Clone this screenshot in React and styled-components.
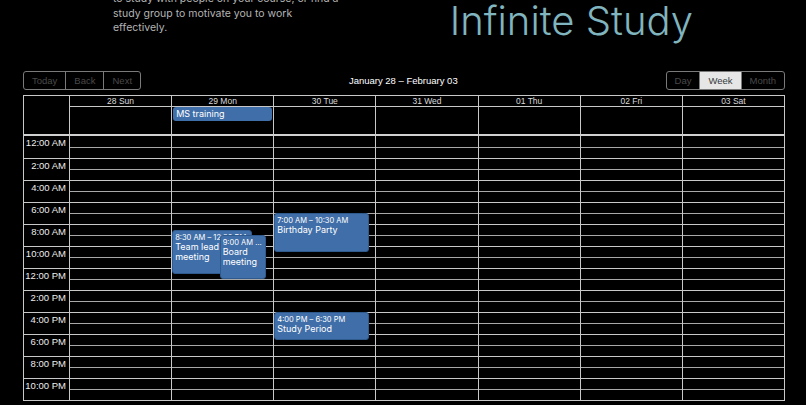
import styled, { createGlobalStyle } from 'styled-components'

const GlobalStyle = createGlobalStyle`
	html, body {
		margin: 0;
		background: #000;
		overflow: hidden;
	}
	* {
		box-sizing: border-box;
	}
`

const days = ['28 Sun', '29 Mon', '30 Tue', '31 Wed', '01 Thu', '02 Fri', '03 Sat']
const hours = [
	'12:00 AM', '2:00 AM', '4:00 AM', '6:00 AM', '8:00 AM', '10:00 AM',
	'12:00 PM', '2:00 PM', '4:00 PM', '6:00 PM', '8:00 PM', '10:00 PM',
]

// hours are in decimal, left/width in percent of the day column
const events = {
	1: [
		{ time: '8:30 AM – 12:30 PM', title: 'Team lead meeting', start: 8.5, end: 12.5, left: 0, width: 79 },
		{ time: '9:00 AM – 1:00 PM', title: 'Board meeting', start: 9, end: 13, left: 47, width: 46 },
	],
	2: [
		{ time: '7:00 AM – 10:30 AM', title: 'Birthday Party', start: 7, end: 10.5, left: 0, width: 94 },
		{ time: '4:00 PM – 6:30 PM', title: 'Study Period', start: 16, end: 18.5, left: 0, width: 94 },
	],
}

const HOUR = 11

const App = () => {
	return (
		<Page>
			<GlobalStyle />
			<Hero>
				<Intro>
					to study with people on your course, or find a study group to motivate you to work
					effectively.
				</Intro>
				<Title>Infinite Study</Title>
			</Hero>
			<Toolbar>
				<ButtonGroup>
					<ToolButton>Today</ToolButton>
					<ToolButton>Back</ToolButton>
					<ToolButton>Next</ToolButton>
				</ButtonGroup>
				<RangeLabel>January 28 – February 03</RangeLabel>
				<ButtonGroup>
					<ToolButton>Day</ToolButton>
					<ToolButton $active>Week</ToolButton>
					<ToolButton>Month</ToolButton>
				</ButtonGroup>
			</Toolbar>
			<Calendar>
				<HeaderRow>
					<Corner />
					{days.map((d, i) => (
						<DayHead key={d}>
							<DayLabel>{d}</DayLabel>
							<AllDay>
								{i === 1 && <AllDayEvent>MS training</AllDayEvent>}
							</AllDay>
						</DayHead>
					))}
				</HeaderRow>
				<Body>
					<Gutter>
						{hours.map((h) => (
							<GutterGroup key={h}>{h}</GutterGroup>
						))}
					</Gutter>
					{days.map((d, i) => (
						<DayColumn key={d}>
							{hours.map((h) => (
								<SlotGroup key={h}>
									<Slot />
									<Slot $second />
								</SlotGroup>
							))}
							{(events[i] || []).map((ev) => (
								<Event
									key={ev.title}
									style={{
										top: ev.start * HOUR,
										height: (ev.end - ev.start) * HOUR,
										left: `${ev.left}%`,
										width: `${ev.width}%`,
									}}
								>
									<EventTime>{ev.time}</EventTime>
									<EventTitle>{ev.title}</EventTitle>
								</Event>
							))}
						</DayColumn>
					))}
				</Body>
			</Calendar>
		</Page>
	)
}

const Page = styled.div`
	width: 806px;
	height: 405px;
	font-family: 'Liberation Sans', Arial, sans-serif;
	color: #fff;
`
const Hero = styled.div`
	height: 71px;
	padding: 0 113px;
	display: flex;
	justify-content: space-between;
	align-items: flex-start;
`
const Intro = styled.p`
	width: 226px;
	margin: -8px 0 0 0;
	font-family: Inter, sans-serif;
	font-size: 10.5px;
	line-height: 14.5px;
	color: #b5b5b5;
`
const Title = styled.h1`
	margin: 1px 0 0 0;
	font-family: Inter, sans-serif;
	font-weight: 300;
	font-size: 40px;
	line-height: 40px;
	color: #80b4be;
`
const Toolbar = styled.div`
	height: 19px;
	margin: 0 21px 5px 23px;
	display: flex;
	align-items: center;
	justify-content: space-between;
`
const ButtonGroup = styled.div`
	display: flex;
	height: 19px;
	border: 1px solid #7a7a7a;
	border-radius: 3px;
	overflow: hidden;
`
const ToolButton = styled.div`
	padding: 0 8px;
	display: flex;
	align-items: center;
	font-size: 9.5px;
	color: ${(p) => (p.$active ? '#373a3c' : '#4a4a4a')};
	background: ${(p) => (p.$active ? '#e6e6e6' : 'transparent')};
	& + & {
		border-left: 1px solid #7a7a7a;
	}
`
const RangeLabel = styled.div`
	font-size: 9.5px;
	color: #fff;
`
const Calendar = styled.div`
	margin: 0 21px 0 23px;
	border: 1px solid #c8c8c8;
`
const HeaderRow = styled.div`
	display: grid;
	grid-template-columns: 45px repeat(7, 1fr);
	border-bottom: 2px solid #d0d0d0;
`
const Corner = styled.div`
	height: 38px;
`
const DayHead = styled.div`
	display: flex;
	flex-direction: column;
	border-left: 1px solid #c8c8c8;
`
const DayLabel = styled.div`
	height: 11px;
	border-bottom: 1px solid #c8c8c8;
	font-size: 8.5px;
	line-height: 11px;
	text-align: center;
	color: #dcdcdc;
`
const AllDay = styled.div`
	flex: 1;
	padding: 0 1px;
`
const AllDayEvent = styled.div`
	height: 14px;
	padding: 0 3px;
	background: #3f6ea8;
	border-radius: 3px;
	font-family: Inter, sans-serif;
	font-size: 9px;
	line-height: 14px;
	color: #fff;
`
const Body = styled.div`
	display: grid;
	grid-template-columns: 45px repeat(7, 1fr);
`
const Gutter = styled.div`
	display: flex;
	flex-direction: column;
`
const GutterGroup = styled.div`
	height: 22px;
	padding: 1px 3px 0 0;
	text-align: right;
	font-size: 9.5px;
	line-height: 11px;
	color: #ededed;
	& + & {
		border-top: 1px solid #c8c8c8;
	}
`
const DayColumn = styled.div`
	position: relative;
	border-left: 1px solid #c8c8c8;
`
const SlotGroup = styled.div`
	height: 22px;
	display: flex;
	flex-direction: column;
	& + & {
		border-top: 1px solid #c8c8c8;
	}
`
const Slot = styled.div`
	flex: 1;
	border-top: ${(p) => (p.$second ? '1px solid #a8a8a8' : 'none')};
`
const Event = styled.div`
	position: absolute;
	padding: 2px 2px;
	background: #3f6ea8;
	border: 1px solid #2e5a8e;
	border-radius: 3px;
	overflow: hidden;
	font-family: Inter, sans-serif;
	color: #fff;
`
const EventTime = styled.div`
	font-size: 7.5px;
	line-height: 9px;
	white-space: nowrap;
	overflow: hidden;
	text-overflow: ellipsis;
`
const EventTitle = styled.div`
	font-size: 9px;
	line-height: 10px;
`

export default App
